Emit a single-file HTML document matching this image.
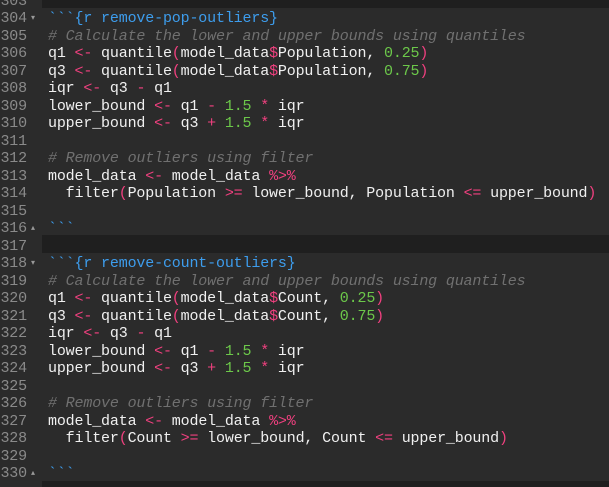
<!DOCTYPE html>
<html><head><meta charset="utf-8"><style>
html,body{margin:0;width:609px;height:487px;overflow:hidden;}
body{background:#1f1f1f;font-family:"Liberation Mono",monospace;font-size:15px;letter-spacing:-0.16px;position:relative}
.g{position:absolute;left:0;top:0;width:42px;height:487px;background:#2b2b2b;}
.band{position:absolute;left:42px;right:0;background:#2b2b2b;}
.w{position:absolute;left:0;top:2px;width:609px;height:487px;}
.r{position:absolute;left:0;width:609px;height:17.5px;line-height:17.5px;}
.ln{position:absolute;left:0;width:27px;text-align:right;color:#8a8a8a;}
.f{position:absolute;left:31px;top:0;font-size:8px;color:#999;}
.c{position:absolute;left:48px;color:#f0f0f0;white-space:pre;}
.o{color:#f0407f}.n{color:#6cc84a}.b{color:#3d9ded}.cm{color:#707070;font-style:italic}.p{color:#f0407f}
</style></head><body>
<div class="g"></div>
<div class="band" style="top:8px;height:227px"></div>
<div class="band" style="top:253px;height:228px"></div>
<div class="w">
<div class="r" style="top:-9.5px"><span class="ln">303</span></div>
<div class="r" style="top:8px"><span class="ln">304</span><span class="f">▾</span><span class="c"><span class="b">&#96;&#96;&#96;{r remove-pop-outliers}</span></span></div>
<div class="r" style="top:25.5px"><span class="ln">305</span><span class="c"><span class="cm"># Calculate the lower and upper bounds using quantiles</span></span></div>
<div class="r" style="top:43px"><span class="ln">306</span><span class="c">q1 <span class="o">&lt;-</span> quantile<span class="p">(</span>model_data<span class="o">$</span>Population, <span class="n">0.25</span><span class="p">)</span></span></div>
<div class="r" style="top:60.5px"><span class="ln">307</span><span class="c">q3 <span class="o">&lt;-</span> quantile<span class="p">(</span>model_data<span class="o">$</span>Population, <span class="n">0.75</span><span class="p">)</span></span></div>
<div class="r" style="top:78px"><span class="ln">308</span><span class="c">iqr <span class="o">&lt;-</span> q3 <span class="o">-</span> q1</span></div>
<div class="r" style="top:95.5px"><span class="ln">309</span><span class="c">lower_bound <span class="o">&lt;-</span> q1 <span class="o">-</span> <span class="n">1.5</span> <span class="o">*</span> iqr</span></div>
<div class="r" style="top:113px"><span class="ln">310</span><span class="c">upper_bound <span class="o">&lt;-</span> q3 <span class="o">+</span> <span class="n">1.5</span> <span class="o">*</span> iqr</span></div>
<div class="r" style="top:130.5px"><span class="ln">311</span></div>
<div class="r" style="top:148px"><span class="ln">312</span><span class="c"><span class="cm"># Remove outliers using filter</span></span></div>
<div class="r" style="top:165.5px"><span class="ln">313</span><span class="c">model_data <span class="o">&lt;-</span> model_data <span class="o">%&gt;%</span></span></div>
<div class="r" style="top:183px"><span class="ln">314</span><span class="c">  filter<span class="p">(</span>Population <span class="o">&gt;=</span> lower_bound, Population <span class="o">&lt;=</span> upper_bound<span class="p">)</span></span></div>
<div class="r" style="top:200.5px"><span class="ln">315</span></div>
<div class="r" style="top:218px"><span class="ln">316</span><span class="f">▴</span><span class="c"><span class="b">&#96;&#96;&#96;</span></span></div>
<div class="r" style="top:235.5px"><span class="ln">317</span></div>
<div class="r" style="top:253px"><span class="ln">318</span><span class="f">▾</span><span class="c"><span class="b">&#96;&#96;&#96;{r remove-count-outliers}</span></span></div>
<div class="r" style="top:270.5px"><span class="ln">319</span><span class="c"><span class="cm"># Calculate the lower and upper bounds using quantiles</span></span></div>
<div class="r" style="top:288px"><span class="ln">320</span><span class="c">q1 <span class="o">&lt;-</span> quantile<span class="p">(</span>model_data<span class="o">$</span>Count, <span class="n">0.25</span><span class="p">)</span></span></div>
<div class="r" style="top:305.5px"><span class="ln">321</span><span class="c">q3 <span class="o">&lt;-</span> quantile<span class="p">(</span>model_data<span class="o">$</span>Count, <span class="n">0.75</span><span class="p">)</span></span></div>
<div class="r" style="top:323px"><span class="ln">322</span><span class="c">iqr <span class="o">&lt;-</span> q3 <span class="o">-</span> q1</span></div>
<div class="r" style="top:340.5px"><span class="ln">323</span><span class="c">lower_bound <span class="o">&lt;-</span> q1 <span class="o">-</span> <span class="n">1.5</span> <span class="o">*</span> iqr</span></div>
<div class="r" style="top:358px"><span class="ln">324</span><span class="c">upper_bound <span class="o">&lt;-</span> q3 <span class="o">+</span> <span class="n">1.5</span> <span class="o">*</span> iqr</span></div>
<div class="r" style="top:375.5px"><span class="ln">325</span></div>
<div class="r" style="top:393px"><span class="ln">326</span><span class="c"><span class="cm"># Remove outliers using filter</span></span></div>
<div class="r" style="top:410.5px"><span class="ln">327</span><span class="c">model_data <span class="o">&lt;-</span> model_data <span class="o">%&gt;%</span></span></div>
<div class="r" style="top:428px"><span class="ln">328</span><span class="c">  filter<span class="p">(</span>Count <span class="o">&gt;=</span> lower_bound, Count <span class="o">&lt;=</span> upper_bound<span class="p">)</span></span></div>
<div class="r" style="top:445.5px"><span class="ln">329</span></div>
<div class="r" style="top:463px"><span class="ln">330</span><span class="f">▴</span><span class="c"><span class="b">&#96;&#96;&#96;</span></span></div>
</div>
</body></html>
